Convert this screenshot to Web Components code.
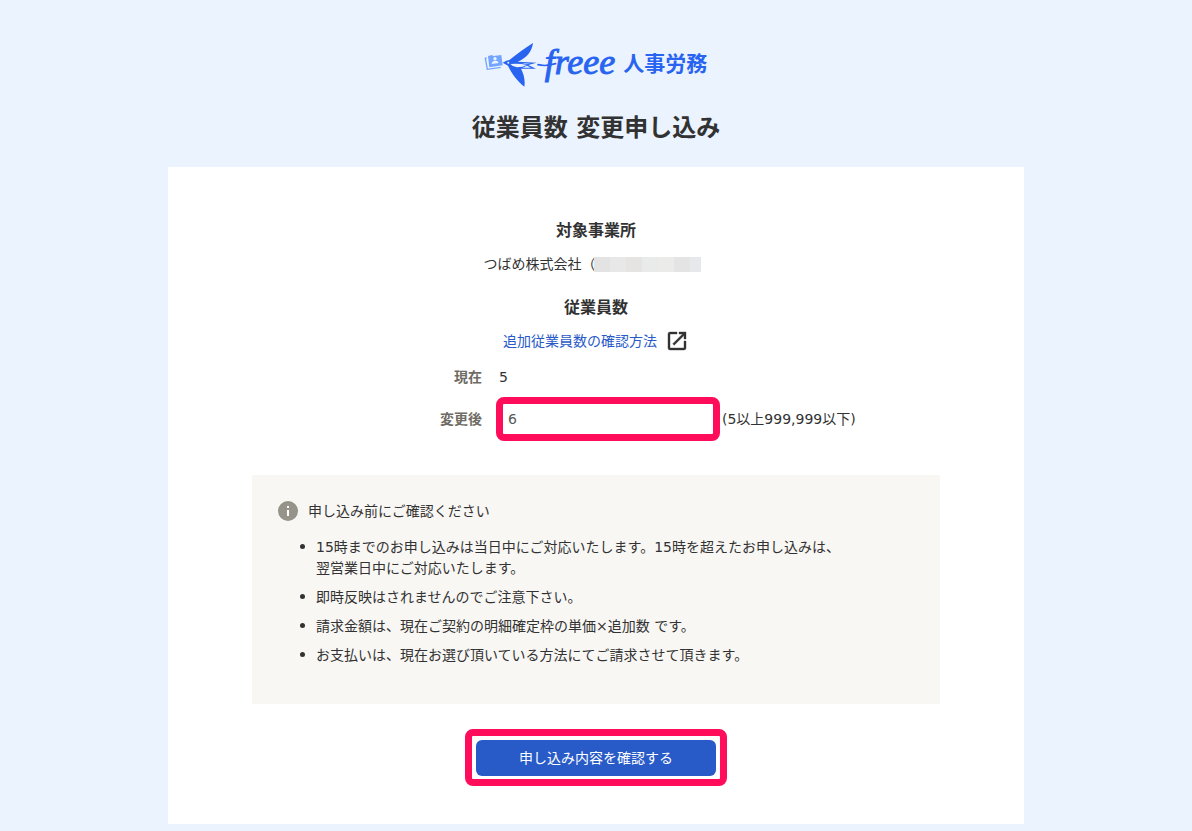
<!DOCTYPE html>
<html lang="ja">
<head>
<meta charset="utf-8">
<meta name="viewport" content="width=device-width, initial-scale=1">
<title>従業員数 変更申し込み</title>
<style>
  body {
    margin: 0;
    background: #ebf3ff;
    color: #323232;
    font: 14px/21px "DejaVu Sans", "Noto Sans CJK JP", sans-serif;
  }
</style>
</head>
<body>
<application-page>
  <service-logo slot="logo">人事労務</service-logo>
  <span slot="title">従業員数 変更申し込み</span>
  <info-section>
    <span slot="heading">対象事業所</span>
    <office-name>つばめ株式会社（</office-name>
  </info-section>
  <info-section>
    <span slot="heading">従業員数</span>
    <external-link href="#guide">追加従業員数の確認方法</external-link>
  </info-section>
  <headcount-form current="5" value="6"></headcount-form>
  <notice-box>
    <span slot="heading">申し込み前にご確認ください</span>
    <notice-item>15時までのお申し込みは当日中にご対応いたします。15時を超えたお申し込みは、<br>翌営業日中にご対応いたします。</notice-item>
    <notice-item>即時反映はされませんのでご注意下さい。</notice-item>
    <notice-item>請求金額は、現在ご契約の明細確定枠の単価×追加数 です。</notice-item>
    <notice-item>お支払いは、現在お選び頂いている方法にてご請求させて頂きます。</notice-item>
  </notice-box>
  <submit-button>申し込み内容を確認する</submit-button>
</application-page>

<script>
const define = (name, html, setup) => {
  const template = document.createElement('template');
  template.innerHTML = html;
  customElements.define(name, class extends HTMLElement {
    constructor() {
      super();
      this.attachShadow({ mode: 'open' }).append(template.content.cloneNode(true));
    }
    connectedCallback() {
      if (setup) setup(this, this.shadowRoot);
    }
  });
};

define('application-page', `
  <style>
    :host { display: block; padding: 36px 24px 7px; }
    header { display: flex; flex-direction: column; align-items: center; gap: 18px; }
    h1 { margin: 0 0 21px; font-size: 24px; line-height: 36px; }
    main {
      box-sizing: border-box; max-width: 856px; margin: 0 auto; padding: 52px 84px 38px;
      background: #fff; display: flex; flex-direction: column;
    }
  </style>
  <header><slot name="logo"></slot><h1><slot name="title"></slot></h1></header>
  <main><slot></slot></main>`);

define('service-logo', `
  <style>
    :host { display: flex; align-items: flex-start; height: 56px; color: #2864f0; }
    svg { display: block; overflow: visible; }
    .brand { font: italic 36px/52px "Liberation Serif", serif; -webkit-text-stroke: 1px currentColor; }
    .product { margin-left: 8px; font-size: 21px; line-height: 56px; font-weight: 700; }
  </style>
  <svg width="60" height="56" viewBox="24 0 180 168" aria-hidden="true">
    <path d="M29 66l-4 1 6 33 40-6" fill="none" stroke="#73a5ff" stroke-width="4"/>
    <path d="M33 60l12-3 4 3 24-3 4 31-40 6z" fill="#73a5ff"/>
    <circle cx="54" cy="68" r="5" fill="#ebf3ff"/>
    <path d="M44 84q0-9 10-10 9-1 11 7z" fill="#ebf3ff"/>
    <path d="M77 80l11-6 9-2C118 55 144 36 168 21 165 45 150 66 122 77L179 80 154 87 177 98 132 98C141 115 145 134 142 152 123 137 104 114 93 89z" fill="#2864f0"/>
    <path d="M100 84Q126 81 149 87 138 94 120 94 106 92 100 84zM134 82l28 1-15 2zM136 95l14-6 12 6z" fill="#ebf3ff"/>
    <circle cx="94" cy="80" r="3" fill="#ebf3ff"/>
    <path d="M183 86Q206 92 236 83" fill="none" stroke="#2864f0" stroke-width="5" stroke-linecap="round"/>
  </svg>
  <span class="brand">freee</span>
  <span class="product"><slot></slot></span>`);

define('info-section', `
  <style>
    :host { display: flex; flex-direction: column; align-items: center; gap: 9px; }
    :host(:not(:first-of-type)) { margin-top: 20px; }
    h2 { margin: 0; font-size: 16px; line-height: 24px; }
  </style>
  <h2><slot name="heading"></slot></h2>
  <slot></slot>`);

define('office-name', `
  <style>
    :host { display: flex; align-items: center; padding-right: 8px; line-height: 24px; }
    .mask {
      width: 107px; height: 15px; margin-left: -2px;
      background: linear-gradient(90deg, #e3e3e4 16px, #e8e8e9 16px 32px, #e6e4e3 32px 48px,
        #e9ebea 48px 64px, #ebebea 64px 80px, #e4e4e5 80px 96px, #e7e8eb 96px);
    }
  </style>
  <slot></slot><span class="mask"></span>`);

define('external-link', `
  <style>
    :host { display: block; }
    a { display: flex; align-items: center; gap: 8px; color: #285ac8; text-decoration: none; }
    svg { display: block; fill: #323232; stroke: #323232; stroke-width: .4; }
  </style>
  <a><slot></slot>
    <svg width="24" height="24" viewBox="0 0 24 24" aria-hidden="true">
      <path d="M19 19H5V5h7V3H5a2 2 0 0 0-2 2v14a2 2 0 0 0 2 2h14a2 2 0 0 0 2-2v-7h-2zM14 3v2h3.590l-9.830 9.830 1.410 1.410L19 6.410V10h2V3z"/>
    </svg>
  </a>`, (host, root) => { root.querySelector('a').href = host.getAttribute('href'); });

define('headcount-form', `
  <style>
    :host { display: block; margin: 14px 0 34px; }
    form { display: grid; grid-template-columns: 230px 1fr; column-gap: 17px; row-gap: 9px; align-items: center; }
    label, .label { text-align: right; font-weight: 700; color: #6e6b64; }
    .field { display: flex; align-items: center; gap: 2px; margin-left: -3px; }
    input {
      box-sizing: border-box; width: 224px; height: 44px; padding: 0 5px; border: 7px solid #ff0d5b;
      border-radius: 8px; background: #fff; color: #595959; font: inherit; outline: 0;
    }
  </style>
  <form>
    <span class="label">現在</span><output></output>
    <label for="count">変更後</label>
    <div class="field"><input id="count" type="text" inputmode="numeric" aria-describedby="range"><span id="range">(5以上999,999以下)</span></div>
  </form>`, (host, root) => {
  root.querySelector('output').textContent = host.getAttribute('current');
  root.querySelector('input').value = host.getAttribute('value');
});

define('notice-box', `
  <style>
    :host { display: block; padding: 25px 26px 38px; background: #f8f7f4; }
    .heading { display: flex; align-items: center; gap: 10px; height: 22px; margin-bottom: 15px; }
    svg { display: block; }
    .list { display: flex; flex-direction: column; gap: 8px; padding-left: 21px; }
  </style>
  <div class="heading">
    <svg width="20" height="20" viewBox="0 0 20 20" aria-hidden="true">
      <circle cx="10" cy="10" r="10" fill="#96938a"/><path d="M9 5h2v2H9zM9 9h2v6H9z" fill="#fff"/>
    </svg>
    <slot name="heading"></slot>
  </div>
  <div class="list" role="list"><slot></slot></div>`);

define('notice-item', `
  <style>
    :host { display: flex; gap: 11px; }
    i { flex: none; width: 5px; height: 5px; margin: 7px 0 0 1px; border-radius: 50%; background: #323232; }
  </style>
  <i></i><span><slot></slot></span>`, host => host.setAttribute('role', 'listitem'));

define('submit-button', `
  <style>
    :host { display: block; align-self: center; margin-top: 25px; padding: 4px 4px 3px; border: 7px solid #ff0d5b; border-radius: 8px; }
    button { display: block; width: 240px; height: 36px; padding: 0; border: 0; border-radius: 6px; background: #285ac8; color: #fff; font: inherit; }
  </style>
  <button type="button"><slot></slot></button>`);
</script>
</body>
</html>
